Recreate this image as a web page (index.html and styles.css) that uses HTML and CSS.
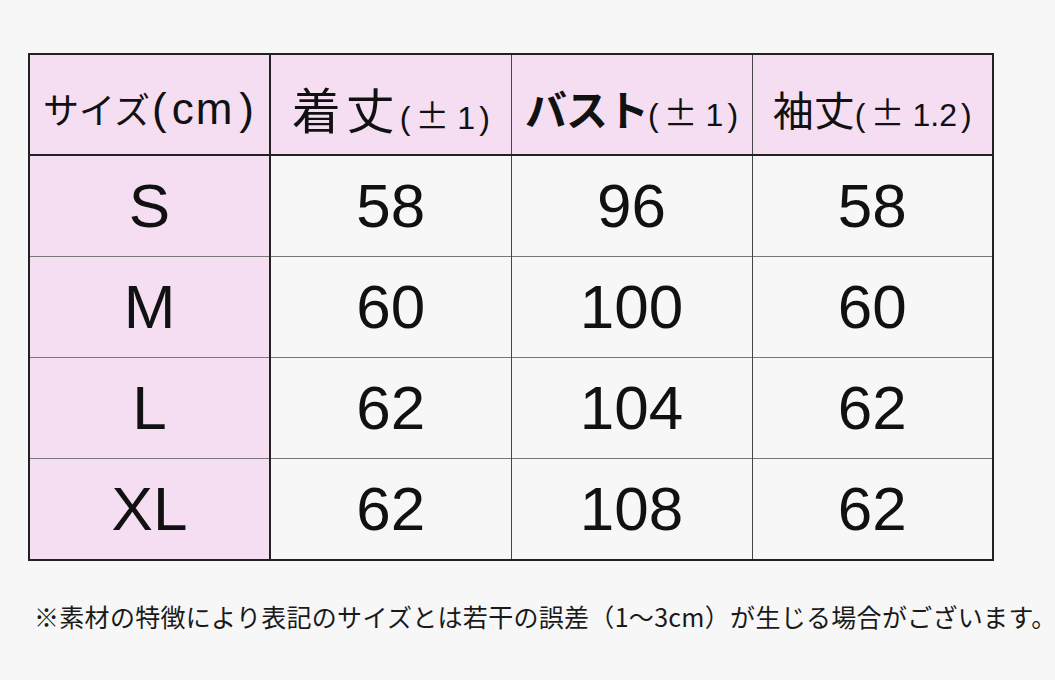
FILE: index.html
```html
<!DOCTYPE html>
<html lang="ja">
<head>
<meta charset="utf-8">
<link rel="stylesheet" href="styles.css">
</head>
<body>
<div class="page">
  <table class="size-table">
    <thead>
      <tr>
        <th class="h1"><span class="hmain">サイズ</span><span class="hunit"><span class="ulp">(</span>cm<span class="urp">)</span></span></th>
        <th><span class="hbig">着丈</span><span class="hsmall">(<span class="pm">±</span>1<span class="rp">)</span></span></th>
        <th><span class="hbold">バスト</span><span class="hsmall">(<span class="pm">±</span>1<span class="rp">)</span></span></th>
        <th><span class="hmid">袖丈</span><span class="hsmall">(<span class="pm">±</span>1.2<span class="rp">)</span></span></th>
      </tr>
    </thead>
    <tbody>
      <tr><td class="size">S</td><td>58</td><td>96</td><td>58</td></tr>
      <tr><td class="size">M</td><td>60</td><td>100</td><td>60</td></tr>
      <tr><td class="size">L</td><td>62</td><td>104</td><td>62</td></tr>
      <tr><td class="size">XL</td><td>62</td><td>108</td><td>62</td></tr>
    </tbody>
  </table>
  <p class="note">※素材の特徴により表記のサイズとは若干の誤差（1～3cm）が生じる場合がございます。</p>
</div>
</body>
</html>
```
FILE: styles.css
```css
html, body {
  margin: 0;
  padding: 0;
  background: #f7f7f7;
}
body {
  width: 1055px;
  height: 680px;
  overflow: hidden;
  font-family: "Noto Sans CJK JP", "Liberation Sans", sans-serif;
  color: #111;
}
.page {
  padding: 53px 0 0 28px;
}
.size-table {
  border-collapse: collapse;
  border: 2px solid #222;
  table-layout: fixed;
  width: 964px;
}
.size-table th,
.size-table td {
  width: 241px;
  text-align: center;
  padding: 0;
  border-left: 1px solid #444;
  white-space: nowrap;
}
.size-table th {
  height: 101px;
  background: #f5ddf2;
  font-weight: normal;
  border-bottom: 2px solid #222;
  vertical-align: middle;
  padding-top: 6px;
  box-sizing: border-box;
}
.size-table th.h1,
.size-table td.size {
  border-left: 2px solid #222;
  border-right: 2px solid #222;
}
.size-table td {
  height: 100px;
  font-family: "Liberation Sans", Arial, sans-serif;
  font-size: 62px;
  line-height: 1;
  background: #f7f7f7;
  border-top: 1px solid #777;
}
.size-table td.size {
  background: #f5ddf2;
}
.hmain {
  font-size: 36px;
}
.hunit {
  font-family: "Liberation Sans", Arial, sans-serif;
  font-size: 44px;
  letter-spacing: 2px;
}
.ulp {
  margin: 0 3px 0 2px;
}
.urp {
  margin-left: 5px;
}
.hbig {
  font-size: 49px;
  letter-spacing: 5px;
}
.hbold {
  font-size: 42px;
  font-weight: 700;
  letter-spacing: -1px;
}
.hmid {
  font-size: 41px;
  letter-spacing: 0;
}
.hsmall {
  font-family: "Liberation Sans", Arial, sans-serif;
  font-size: 32px;
}
.pm {
  font-family: "Noto Sans CJK JP", sans-serif;
  font-size: 34px;
  margin: 0 8px 0 5px;
}
.rp {
  margin-left: 4px;
}
.note {
  margin: 43px 0 0 6px;
  font-size: 25px;
  line-height: 1;
  letter-spacing: 0.3px;
  white-space: nowrap;
  color: #1a1a1a;
}
```
